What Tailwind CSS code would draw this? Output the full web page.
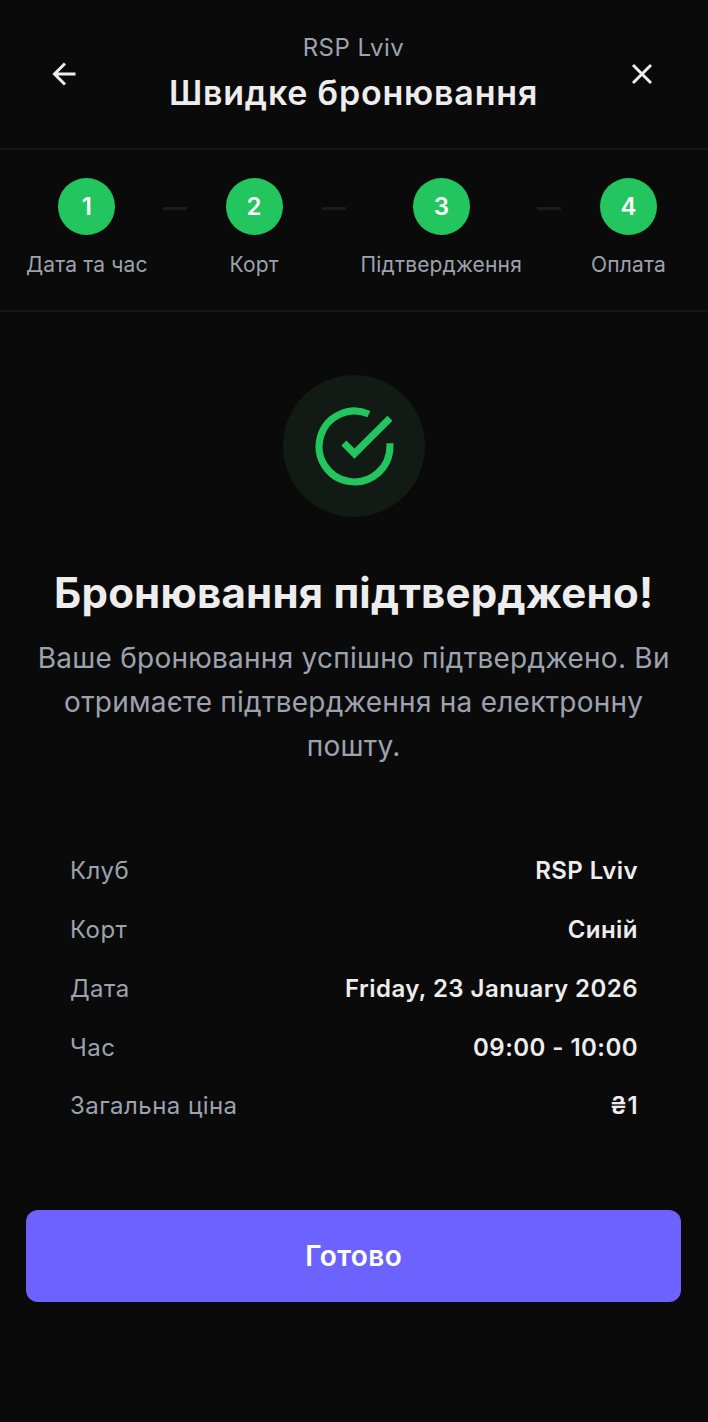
<!DOCTYPE html>
<html>
<head>
<meta charset="utf-8" />
<title>Швидке бронювання</title>
<script src="https://cdn.jsdelivr.net/npm/@tailwindcss/browser@4"></script>
</head>
<body class="bg-[#0a0a0a] font-['Inter',sans-serif] text-[#ededed]">
<div class="w-[708px] h-[1422px] flex flex-col">
  <header class="h-[150px] pl-[47px] pr-[48px] pt-[34px] flex justify-between border-b-2 border-[#111a15]">
    <svg class="mt-[22px] w-[36px] h-[36px]" viewBox="0 0 24 24" fill="none" stroke="#ededed" stroke-width="2"><path d="M19 12H5M12 19l-7-7 7-7"/></svg>
    <div class="flex flex-col items-center">
      <p class="text-[24px] leading-[28px] tracking-[0.5px] text-[#9ca3af]">RSP Lviv</p>
      <h1 class="text-[34px] leading-[44px] tracking-[0.8px] mt-[9px] font-semibold">Швидке бронювання</h1>
    </div>
    <svg class="mt-[22px] w-[36px] h-[36px]" viewBox="0 0 24 24" fill="none" stroke="#ededed" stroke-width="2"><path d="M18 6 6 18M6 6l12 12"/></svg>
  </header>
  <div class="h-[162px] pl-[26px] pr-[27px] pt-[28px] flex justify-between border-b-2 border-[#111a15]">
    <div class="flex flex-col items-center min-w-[105px]">
      <div class="w-[57px] h-[57px] rounded-full bg-[#22c55e] text-white font-semibold text-[24px] flex items-center justify-center">1</div>
      <span class="mt-[14px] text-[21px] leading-[32px] tracking-[0.15px] text-[#9ca3af]">Дата та час</span>
    </div>
    <div class="mt-[29px] w-[24px] h-[3px] bg-[#1c1c1c]"></div>
    <div class="flex flex-col items-center min-w-[105px]">
      <div class="w-[57px] h-[57px] rounded-full bg-[#22c55e] text-white font-semibold text-[24px] flex items-center justify-center">2</div>
      <span class="mt-[14px] text-[21px] leading-[32px] tracking-[0.15px] text-[#9ca3af]">Корт</span>
    </div>
    <div class="mt-[29px] w-[24px] h-[3px] bg-[#1c1c1c]"></div>
    <div class="flex flex-col items-center min-w-[105px]">
      <div class="w-[57px] h-[57px] rounded-full bg-[#22c55e] text-white font-semibold text-[24px] flex items-center justify-center">3</div>
      <span class="mt-[14px] text-[21px] leading-[32px] tracking-[0.15px] text-[#9ca3af]">Підтвердження</span>
    </div>
    <div class="mt-[29px] w-[24px] h-[3px] bg-[#1c1c1c]"></div>
    <div class="flex flex-col items-center min-w-[105px]">
      <div class="w-[57px] h-[57px] rounded-full bg-[#22c55e] text-white font-semibold text-[24px] flex items-center justify-center">4</div>
      <span class="mt-[14px] text-[21px] leading-[32px] tracking-[0.15px] text-[#9ca3af]">Оплата</span>
    </div>
  </div>
  <main class="flex-1 pl-[26.4px] pr-[27px] pt-[63px] flex flex-col items-center">
    <div class="w-[142px] h-[142px] rounded-full bg-[#121a16] flex items-center justify-center">
      <svg class="ml-[1px] w-[85px] h-[85px]" viewBox="0 0 24 24" fill="none" stroke="#22c55e" stroke-width="2"><path d="M22 11.08V12a10 10 0 1 1-5.93-9.14"/><path d="M22 4 12 14.01l-3-3"/></svg>
    </div>
    <h2 class="mt-[50px] text-[42px] leading-[52px] tracking-[0.2px] font-bold">Бронювання підтверджено!</h2>
    <p class="mt-[18px] text-[28px] leading-[43.75px] tracking-[0.24px] text-[#9ca3af] text-center">Ваше бронювання успішно підтверджено. Ви отримаєте підтвердження на електронну пошту.</p>
    <dl class="mt-[87px] w-full pl-[43.6px] pr-[43px] flex flex-col gap-[26.75px] text-[24px] leading-[32px] tracking-[0.45px]">
      <div class="flex justify-between"><dt class="text-[#9ca3af]">Клуб</dt><dd class="font-semibold">RSP Lviv</dd></div>
      <div class="flex justify-between"><dt class="text-[#9ca3af]">Корт</dt><dd class="font-semibold">Синій</dd></div>
      <div class="flex justify-between"><dt class="text-[#9ca3af]">Дата</dt><dd class="font-semibold">Friday, 23 January 2026</dd></div>
      <div class="flex justify-between"><dt class="text-[#9ca3af]">Час</dt><dd class="font-semibold">09:00 - 10:00</dd></div>
      <div class="flex justify-between"><dt class="text-[#9ca3af]">Загальна ціна</dt><dd class="font-semibold">₴1</dd></div>
    </dl>
    <button class="mt-[88px] w-full h-[92px] rounded-[12px] bg-[#6c63ff] text-white text-[28px] tracking-[0.4px] font-semibold">Готово</button>
  </main>
</div>
</body>
</html>
